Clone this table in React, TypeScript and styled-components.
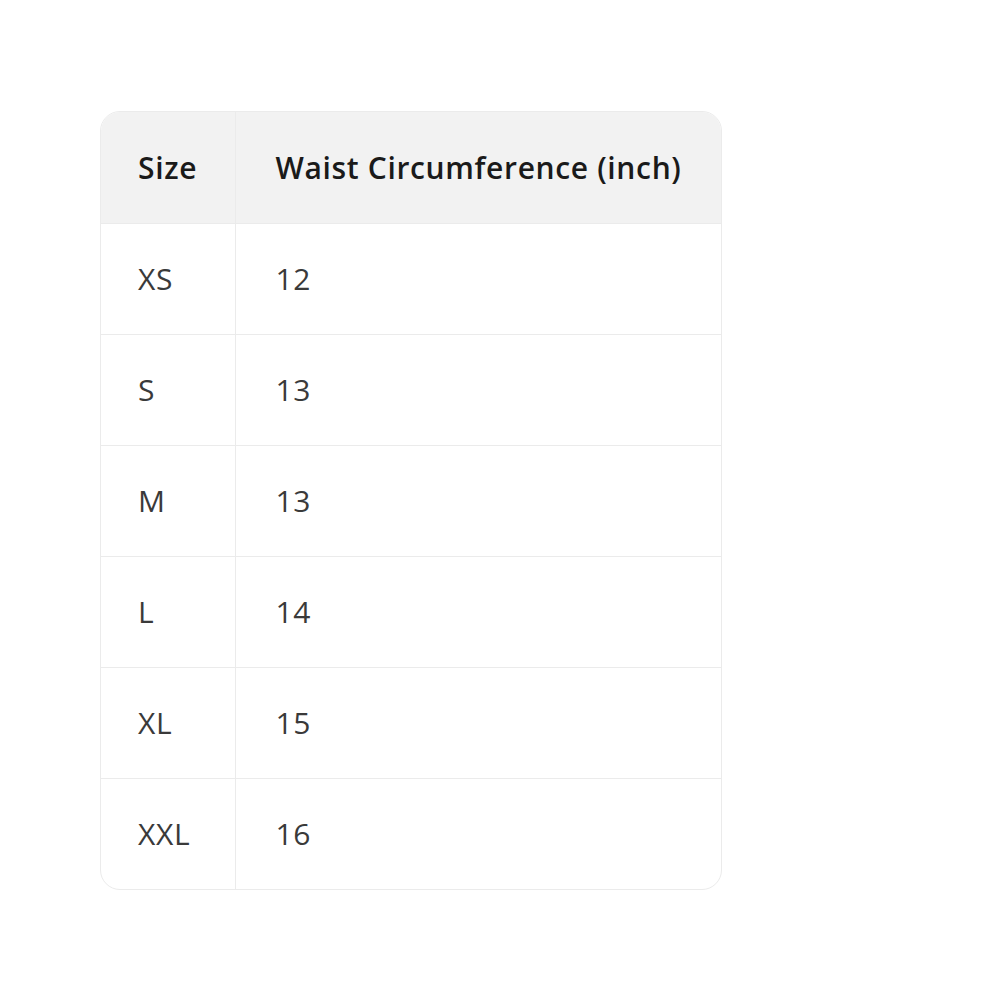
import styled, { createGlobalStyle } from 'styled-components';

const GlobalStyle = createGlobalStyle`
  body {
    margin: 0;
    background: #ffffff;
    font-family: 'Open Sans', 'Noto Sans', sans-serif;
  }
`;

const Page = styled.div`
  width: 1000px;
  height: 1000px;
  padding: 111px 0 0 100px;
  box-sizing: border-box;
`;

const Card = styled.div`
  width: 622px;
  box-sizing: border-box;
  border: 1px solid #ebebeb;
  border-radius: 20px;
  overflow: hidden;
`;

const Table = styled.table`
  width: 100%;
  border-collapse: collapse;
  table-layout: fixed;
`;

const HeadRow = styled.tr`
  background: #f2f2f2;
`;

const Cell = styled.td<{ $first?: boolean; $head?: boolean }>`
  height: 111px;
  box-sizing: border-box;
  padding: 0 0 0 ${({ $first }) => ($first ? '37px' : '40px')};
  width: ${({ $first }) => ($first ? '134px' : 'auto')};
  font-size: 30px;
  letter-spacing: 0.65px;
  font-weight: ${({ $head }) => ($head ? 600 : 400)};
  color: ${({ $head }) => ($head ? '#1a1a1a' : '#3a3a3a')};
  border-left: ${({ $first }) => ($first ? 'none' : '1px solid #ebebeb')};
  border-top: ${({ $head }) => ($head ? 'none' : '1px solid #ebebeb')};
  text-align: left;
  vertical-align: middle;
  white-space: nowrap;
`;

const rows = [
  ['XS', '12'],
  ['S', '13'],
  ['M', '13'],
  ['L', '14'],
  ['XL', '15'],
  ['XXL', '16'],
];

export default function App() {
  return (
    <>
      <GlobalStyle />
      <Page>
        <Card>
          <Table>
            <thead>
              <HeadRow>
                <Cell as="th" $first $head>
                  Size
                </Cell>
                <Cell as="th" $head>
                  Waist Circumference (inch)
                </Cell>
              </HeadRow>
            </thead>
            <tbody>
              {rows.map(([size, waist]) => (
                <tr key={size}>
                  <Cell $first>{size}</Cell>
                  <Cell>{waist}</Cell>
                </tr>
              ))}
            </tbody>
          </Table>
        </Card>
      </Page>
    </>
  );
}
